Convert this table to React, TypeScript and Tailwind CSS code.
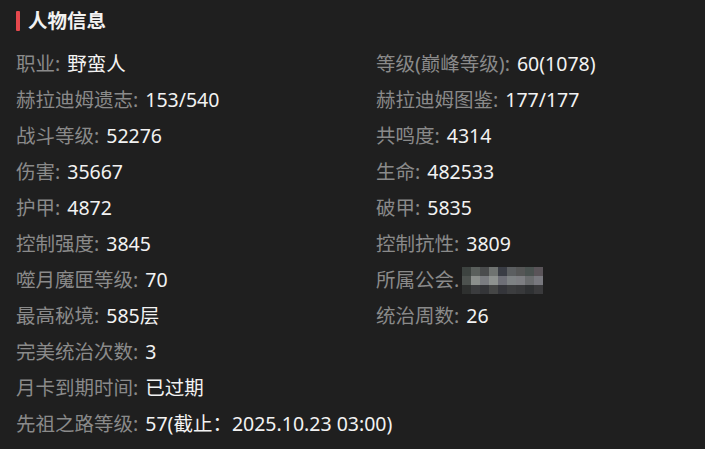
const rows: [string, string, string?, string?][] = [
  ["职业", "野蛮人", "等级(巅峰等级)", "60(1078)"],
  ["赫拉迪姆遗志", "153/540", "赫拉迪姆图鉴", "177/177"],
  ["战斗等级", "52276", "共鸣度", "4314"],
  ["伤害", "35667", "生命", "482533"],
  ["护甲", "4872", "破甲", "5835"],
  ["控制强度", "3845", "控制抗性", "3809"],
  ["噬月魔匣等级", "70", "所属公会", ""],
  ["最高秘境", "585层", "统治周数", "26"],
  ["完美统治次数", "3"],
  ["月卡到期时间", "已过期"],
  ["先祖之路等级", "57(截止：2025.10.23 03:00)"],
];

// mosaic colours for the hidden guild name
const mosaic = [
  ["#3d4340", "#5a5f5c", "#4a4c4d", "#6f7371", "#3a3d45", "#5b5e60", "#555656", "#4a5250", "#5a5459"],
  ["#4d524f", "#8b8f8c", "#7a7c80", "#8e9290", "#6e6f77", "#7e8284", "#7d7e82", "#6a6c6e", "#78787e"],
  ["#2e302f", "#3b3c3e", "#343538", "#454646", "#34353a", "#3c3d3f", "#38393b", "#2f3133", "#3a3a3c"],
];

function Mosaic() {
  return (
    <span className="inline-flex flex-col ml-[3px]">
      {mosaic.map((r, i) => (
        <span key={i} className="flex">
          {r.map((c, j) => (
            <span key={j} className="w-[9px] h-[9px]" style={{ backgroundColor: c }} />
          ))}
        </span>
      ))}
    </span>
  );
}

function Field({ label, value }: { label: string; value: string }) {
  const guild = label === "所属公会";
  return (
    <div className="flex items-center h-[36px] whitespace-nowrap">
      <span className="text-[#8a8a8a]">
        {label}
        {guild ? "." : ":"}
      </span>
      {guild ? (
        <Mosaic />
      ) : (
        <span className="ml-[7px] text-[#f2f2f2]">{value}</span>
      )}
    </div>
  );
}

export default function App() {
  return (
    <div
      className="w-[705px] h-[449px] bg-[#1f1f1f] px-4 overflow-hidden"
      style={{ fontFamily: '"Noto Sans", "Noto Sans CJK SC", sans-serif' }}
    >
      <div className="h-[42px] flex items-center gap-[8px]">
        <div className="w-[4px] h-[20px] bg-[#e5484d] rounded-[1px]" />
        <h2 className="text-[19.5px] font-bold text-[#f2f2f2]">人物信息</h2>
      </div>
      <div className="grid grid-cols-[360px_1fr] pt-1 text-[19.5px]">
        {rows.map((r, i) => (
          <div key={i} className="contents">
            <Field label={r[0]} value={r[1]} />
            {r[2] ? <Field label={r[2]} value={r[3] ?? ""} /> : <div />}
          </div>
        ))}
      </div>
    </div>
  );
}
